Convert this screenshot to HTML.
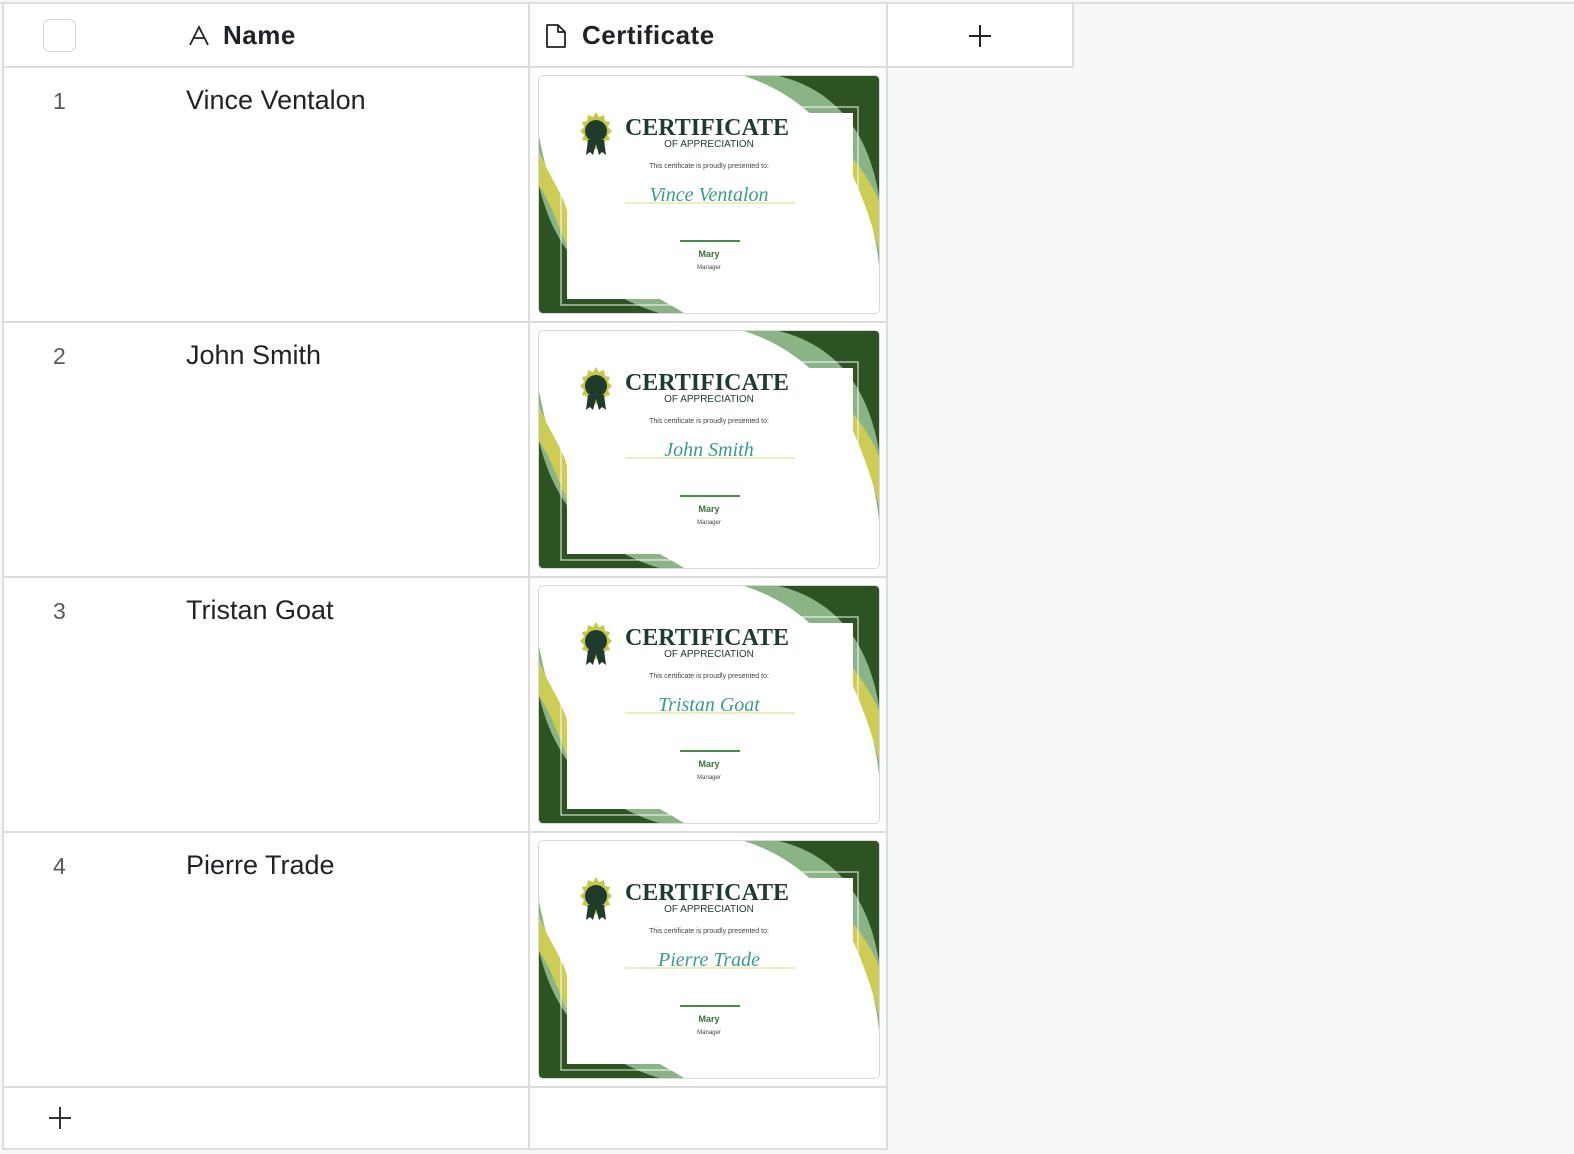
<!DOCTYPE html>
<html><head><meta charset="utf-8"><style>
body{margin:0;width:1574px;height:1154px;background:#f7f8fa;font-family:"Liberation Sans",sans-serif;position:relative;overflow:hidden;color:#1f2328}
.a{position:absolute}
.hl{position:absolute;height:2px;background:#dcdcdc}
.vl{position:absolute;width:2px;background:#dcdcdc}
.num{position:absolute;left:53px;font-size:23px;color:#555a60}
.nm{position:absolute;left:186px;font-size:27px}
.card{position:absolute;left:538px;width:340px;height:237px;border:1px solid #d8d8d8;border-radius:5px;overflow:hidden;background:#fff}
</style></head><body>
<div class="a" style="left:3px;top:3px;width:1070px;height:64px;background:#fff"></div>
<div class="a" style="left:3px;top:67px;width:884px;height:1082px;background:#fff"></div>
<div class="hl" style="left:0;top:2px;width:1574px"></div>
<div class="hl" style="left:3px;top:66px;width:1070px"></div>
<div class="hl" style="left:3px;top:321px;width:884px"></div>
<div class="hl" style="left:3px;top:576px;width:884px"></div>
<div class="hl" style="left:3px;top:831px;width:884px"></div>
<div class="hl" style="left:3px;top:1086px;width:884px"></div>
<div class="hl" style="left:3px;top:1148px;width:884px"></div>
<div class="vl" style="left:2px;top:2px;height:1148px"></div>
<div class="vl" style="left:528px;top:2px;height:1148px"></div>
<div class="vl" style="left:886px;top:2px;height:1148px"></div>
<div class="vl" style="left:1072px;top:2px;height:66px"></div>
<div class="a" style="left:43px;top:19px;width:33px;height:33px;border:1px solid #d4d4d4;border-radius:7px;box-sizing:border-box;background:#fff"></div>
<svg class="a" style="left:188px;top:25px" width="22" height="22" viewBox="0 0 22 22"><path d="M2 20 L11 2 L20 20 M5.5 13 H16.5" fill="none" stroke="#1f2328" stroke-width="1.8"/></svg>
<div class="a" style="left:223px;top:20px;font-size:26px;font-weight:bold;letter-spacing:.5px">Name</div>
<svg class="a" style="left:544px;top:23px" width="24" height="26" viewBox="0 0 24 26"><path d="M3 2 H14 L21 9 V24 H3 Z M14 2 V9 H21" fill="none" stroke="#1f2328" stroke-width="1.8" stroke-linejoin="round"/></svg>
<div class="a" style="left:582px;top:20px;font-size:26px;font-weight:bold;letter-spacing:.5px">Certificate</div>
<svg class="a" style="left:968px;top:24px" width="24" height="24"><path d="M12 1V23M1 12H23" stroke="#1f2328" stroke-width="2"/></svg>
<svg class="a" style="left:48px;top:1106px" width="24" height="24"><path d="M12 1V23M1 12H23" stroke="#333" stroke-width="2"/></svg>

<div class="num" style="top:88px">1</div><div class="nm" style="top:85px">Vince Ventalon</div>
<div class="num" style="top:343px">2</div><div class="nm" style="top:340px">John Smith</div>
<div class="num" style="top:598px">3</div><div class="nm" style="top:595px">Tristan Goat</div>
<div class="num" style="top:853px">4</div><div class="nm" style="top:850px">Pierre Trade</div>

<div class="card" style="top:75px"><svg width="340" height="237" viewBox="0 0 340 237">
<path d="M205 0H340V190C333 120 300 30 205 0Z" fill="#8ab485"/>
<path d="M240 0H340V120C330 60 300 15 240 0Z" fill="#2d5323"/>
<path d="M308 88C322 115 334 150 340 175V125C333 108 322 92 312 80Z" fill="#cdcc55"/>
<path d="M0 237H145C110 215 70 200 40 170C20 140 10 110 0 60Z" fill="#8ab485"/>
<path d="M0 237H120C80 225 45 200 25 170C12 150 5 130 0 110Z" fill="#2d5323"/>
<path d="M0 75C10 100 25 120 28 135V170C18 145 8 120 0 110Z" fill="#cdcc55"/>
<rect x="28" y="37" width="286" height="186" fill="#fff"/>
<rect x="22" y="31" width="297" height="198" fill="none" stroke="#fff" stroke-width="1.2" opacity=".8"/>
<polygon points="57,36 60,41 65,39 66,45 71,46 69,51 73,55 69,59 71,64 66,65 65,71 60,69 57,74 54,69 49,71 48,65 43,64 45,59 41,55 45,51 43,46 48,45 49,39 54,41" fill="#c5c74a"/>
<circle cx="57" cy="55" r="11" fill="#1f3b2d"/>
<path d="M49 64L47 79L51 76L54 79L57 68L60 79L63 76L67 79L65 64Z" fill="#1f3b2d"/>
<text x="168" y="59" text-anchor="middle" font-family="Liberation Serif,serif" font-weight="bold" font-size="24" fill="#1f3b2d">CERTIFICATE</text>
<text x="170" y="71" text-anchor="middle" font-size="10" fill="#1f3b2d">OF APPRECIATION</text>
<text x="170" y="92" text-anchor="middle" font-size="7" fill="#444">This certificate is proudly presented to:</text>
<text x="170" y="125" text-anchor="middle" font-family="Liberation Serif,serif" font-style="italic" font-size="20" fill="#3a9a8e">Vince Ventalon</text>
<line x1="86" y1="127" x2="256" y2="127" stroke="#d8dc80" stroke-width="1"/>
<line x1="141" y1="165" x2="201" y2="165" stroke="#4a8a4a" stroke-width="2"/>
<text x="170" y="181" text-anchor="middle" font-size="9" font-weight="bold" fill="#3a6e3a">Mary</text>
<text x="170" y="193" text-anchor="middle" font-size="6" fill="#444">Manager</text>
</svg></div>

<div class="card" style="top:330px"><svg width="340" height="237" viewBox="0 0 340 237">
<path d="M205 0H340V190C333 120 300 30 205 0Z" fill="#8ab485"/>
<path d="M240 0H340V120C330 60 300 15 240 0Z" fill="#2d5323"/>
<path d="M308 88C322 115 334 150 340 175V125C333 108 322 92 312 80Z" fill="#cdcc55"/>
<path d="M0 237H145C110 215 70 200 40 170C20 140 10 110 0 60Z" fill="#8ab485"/>
<path d="M0 237H120C80 225 45 200 25 170C12 150 5 130 0 110Z" fill="#2d5323"/>
<path d="M0 75C10 100 25 120 28 135V170C18 145 8 120 0 110Z" fill="#cdcc55"/>
<rect x="28" y="37" width="286" height="186" fill="#fff"/>
<rect x="22" y="31" width="297" height="198" fill="none" stroke="#fff" stroke-width="1.2" opacity=".8"/>
<polygon points="57,36 60,41 65,39 66,45 71,46 69,51 73,55 69,59 71,64 66,65 65,71 60,69 57,74 54,69 49,71 48,65 43,64 45,59 41,55 45,51 43,46 48,45 49,39 54,41" fill="#c5c74a"/>
<circle cx="57" cy="55" r="11" fill="#1f3b2d"/>
<path d="M49 64L47 79L51 76L54 79L57 68L60 79L63 76L67 79L65 64Z" fill="#1f3b2d"/>
<text x="168" y="59" text-anchor="middle" font-family="Liberation Serif,serif" font-weight="bold" font-size="24" fill="#1f3b2d">CERTIFICATE</text>
<text x="170" y="71" text-anchor="middle" font-size="10" fill="#1f3b2d">OF APPRECIATION</text>
<text x="170" y="92" text-anchor="middle" font-size="7" fill="#444">This certificate is proudly presented to:</text>
<text x="170" y="125" text-anchor="middle" font-family="Liberation Serif,serif" font-style="italic" font-size="20" fill="#3a9a8e">John Smith</text>
<line x1="86" y1="127" x2="256" y2="127" stroke="#d8dc80" stroke-width="1"/>
<line x1="141" y1="165" x2="201" y2="165" stroke="#4a8a4a" stroke-width="2"/>
<text x="170" y="181" text-anchor="middle" font-size="9" font-weight="bold" fill="#3a6e3a">Mary</text>
<text x="170" y="193" text-anchor="middle" font-size="6" fill="#444">Manager</text>
</svg></div>

<div class="card" style="top:585px"><svg width="340" height="237" viewBox="0 0 340 237">
<path d="M205 0H340V190C333 120 300 30 205 0Z" fill="#8ab485"/>
<path d="M240 0H340V120C330 60 300 15 240 0Z" fill="#2d5323"/>
<path d="M308 88C322 115 334 150 340 175V125C333 108 322 92 312 80Z" fill="#cdcc55"/>
<path d="M0 237H145C110 215 70 200 40 170C20 140 10 110 0 60Z" fill="#8ab485"/>
<path d="M0 237H120C80 225 45 200 25 170C12 150 5 130 0 110Z" fill="#2d5323"/>
<path d="M0 75C10 100 25 120 28 135V170C18 145 8 120 0 110Z" fill="#cdcc55"/>
<rect x="28" y="37" width="286" height="186" fill="#fff"/>
<rect x="22" y="31" width="297" height="198" fill="none" stroke="#fff" stroke-width="1.2" opacity=".8"/>
<polygon points="57,36 60,41 65,39 66,45 71,46 69,51 73,55 69,59 71,64 66,65 65,71 60,69 57,74 54,69 49,71 48,65 43,64 45,59 41,55 45,51 43,46 48,45 49,39 54,41" fill="#c5c74a"/>
<circle cx="57" cy="55" r="11" fill="#1f3b2d"/>
<path d="M49 64L47 79L51 76L54 79L57 68L60 79L63 76L67 79L65 64Z" fill="#1f3b2d"/>
<text x="168" y="59" text-anchor="middle" font-family="Liberation Serif,serif" font-weight="bold" font-size="24" fill="#1f3b2d">CERTIFICATE</text>
<text x="170" y="71" text-anchor="middle" font-size="10" fill="#1f3b2d">OF APPRECIATION</text>
<text x="170" y="92" text-anchor="middle" font-size="7" fill="#444">This certificate is proudly presented to:</text>
<text x="170" y="125" text-anchor="middle" font-family="Liberation Serif,serif" font-style="italic" font-size="20" fill="#3a9a8e">Tristan Goat</text>
<line x1="86" y1="127" x2="256" y2="127" stroke="#d8dc80" stroke-width="1"/>
<line x1="141" y1="165" x2="201" y2="165" stroke="#4a8a4a" stroke-width="2"/>
<text x="170" y="181" text-anchor="middle" font-size="9" font-weight="bold" fill="#3a6e3a">Mary</text>
<text x="170" y="193" text-anchor="middle" font-size="6" fill="#444">Manager</text>
</svg></div>

<div class="card" style="top:840px"><svg width="340" height="237" viewBox="0 0 340 237">
<path d="M205 0H340V190C333 120 300 30 205 0Z" fill="#8ab485"/>
<path d="M240 0H340V120C330 60 300 15 240 0Z" fill="#2d5323"/>
<path d="M308 88C322 115 334 150 340 175V125C333 108 322 92 312 80Z" fill="#cdcc55"/>
<path d="M0 237H145C110 215 70 200 40 170C20 140 10 110 0 60Z" fill="#8ab485"/>
<path d="M0 237H120C80 225 45 200 25 170C12 150 5 130 0 110Z" fill="#2d5323"/>
<path d="M0 75C10 100 25 120 28 135V170C18 145 8 120 0 110Z" fill="#cdcc55"/>
<rect x="28" y="37" width="286" height="186" fill="#fff"/>
<rect x="22" y="31" width="297" height="198" fill="none" stroke="#fff" stroke-width="1.2" opacity=".8"/>
<polygon points="57,36 60,41 65,39 66,45 71,46 69,51 73,55 69,59 71,64 66,65 65,71 60,69 57,74 54,69 49,71 48,65 43,64 45,59 41,55 45,51 43,46 48,45 49,39 54,41" fill="#c5c74a"/>
<circle cx="57" cy="55" r="11" fill="#1f3b2d"/>
<path d="M49 64L47 79L51 76L54 79L57 68L60 79L63 76L67 79L65 64Z" fill="#1f3b2d"/>
<text x="168" y="59" text-anchor="middle" font-family="Liberation Serif,serif" font-weight="bold" font-size="24" fill="#1f3b2d">CERTIFICATE</text>
<text x="170" y="71" text-anchor="middle" font-size="10" fill="#1f3b2d">OF APPRECIATION</text>
<text x="170" y="92" text-anchor="middle" font-size="7" fill="#444">This certificate is proudly presented to:</text>
<text x="170" y="125" text-anchor="middle" font-family="Liberation Serif,serif" font-style="italic" font-size="20" fill="#3a9a8e">Pierre Trade</text>
<line x1="86" y1="127" x2="256" y2="127" stroke="#d8dc80" stroke-width="1"/>
<line x1="141" y1="165" x2="201" y2="165" stroke="#4a8a4a" stroke-width="2"/>
<text x="170" y="181" text-anchor="middle" font-size="9" font-weight="bold" fill="#3a6e3a">Mary</text>
<text x="170" y="193" text-anchor="middle" font-size="6" fill="#444">Manager</text>
</svg></div>
</body></html>
